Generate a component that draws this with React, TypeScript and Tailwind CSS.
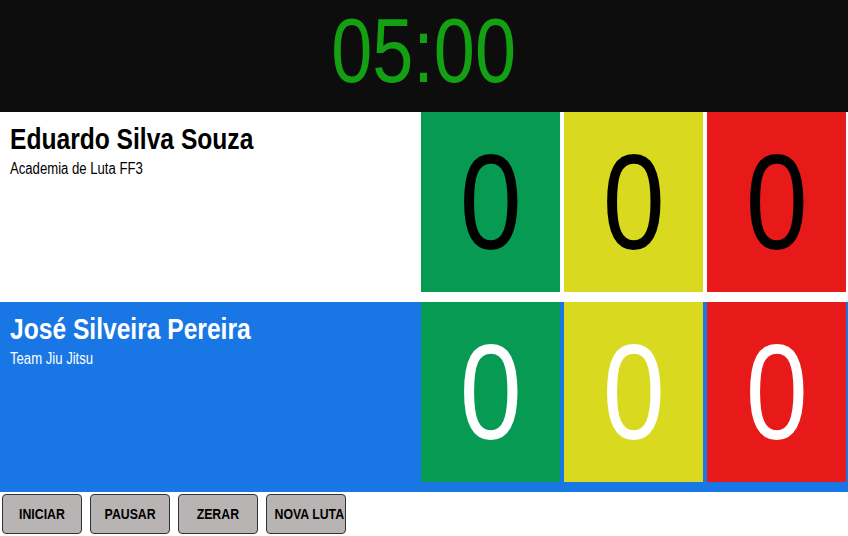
const font = { fontFamily: '"Liberation Sans", Arial, sans-serif' };

type Fighter = { name: string; team: string };

// no narrow face installed, so squeeze Liberation Sans to Arial Narrow's width
function Narrow({ children, center = false }: { children: React.ReactNode; center?: boolean }) {
  return (
    <span className={`inline-block whitespace-nowrap scale-x-[0.82] ${center ? 'origin-center' : 'origin-left'}`}>
      {children}
    </span>
  );
}

function ScoreBox({ color, digit, first = false }: { color: string; digit: string; first?: boolean }) {
  return (
    <div className={`${first ? '' : 'ml-[4px]'} flex w-[139px] items-center justify-center ${color} text-[136px] leading-none ${digit}`}>
      <Narrow center>0</Narrow>
    </div>
  );
}

function ScoreRow({ fighter, variant }: { fighter: Fighter; variant: 'white' | 'blue' }) {
  const isBlue = variant === 'blue';
  const digit = isBlue ? 'text-white' : 'text-black';
  return (
    <div className={`flex h-[190px] pb-[10px] ${isBlue ? 'bg-[#1877e5]' : 'bg-white'}`}>
      <div className={`w-[421px] px-[10px] pt-[10px] ${isBlue ? 'text-white' : 'text-black'}`}>
        <h2 className="text-[30px] font-bold leading-[1.15]">
          <Narrow>{fighter.name}</Narrow>
        </h2>
        <p className="mt-[3px] text-[16px] leading-[1.15]">
          <Narrow>{fighter.team}</Narrow>
        </p>
      </div>
      <ScoreBox color="bg-[#079a52]" digit={digit} first />
      <ScoreBox color="bg-[#d9d920]" digit={digit} />
      <ScoreBox color="bg-[#e81919]" digit={digit} />
    </div>
  );
}

export default function App() {
  const buttons = ['INICIAR', 'PAUSAR', 'ZERAR', 'NOVA LUTA'];

  return (
    <div className="min-h-screen w-[848px] bg-white" style={font}>
      {/* Timer */}
      <div className="h-[112px] bg-[#0d0d0d] pt-[6px] text-center">
        <div className="text-[90px] leading-none text-[#13a013]">
          <Narrow center>05:00</Narrow>
        </div>
      </div>

      <ScoreRow fighter={{ name: 'Eduardo Silva Souza', team: 'Academia de Luta FF3' }} variant="white" />
      <ScoreRow fighter={{ name: 'José Silveira Pereira', team: 'Team Jiu Jitsu' }} variant="blue" />

      {/* Controls */}
      <div className="flex gap-[8px] px-[2px] pt-[2px]">
        {buttons.map((label) => (
          <button
            key={label}
            className="h-[40px] w-[80px] rounded-[4px] border border-[#333] bg-[#b9b4b4] text-[15px] font-bold text-black"
          >
            <Narrow center>{label}</Narrow>
          </button>
        ))}
      </div>
    </div>
  );
}
